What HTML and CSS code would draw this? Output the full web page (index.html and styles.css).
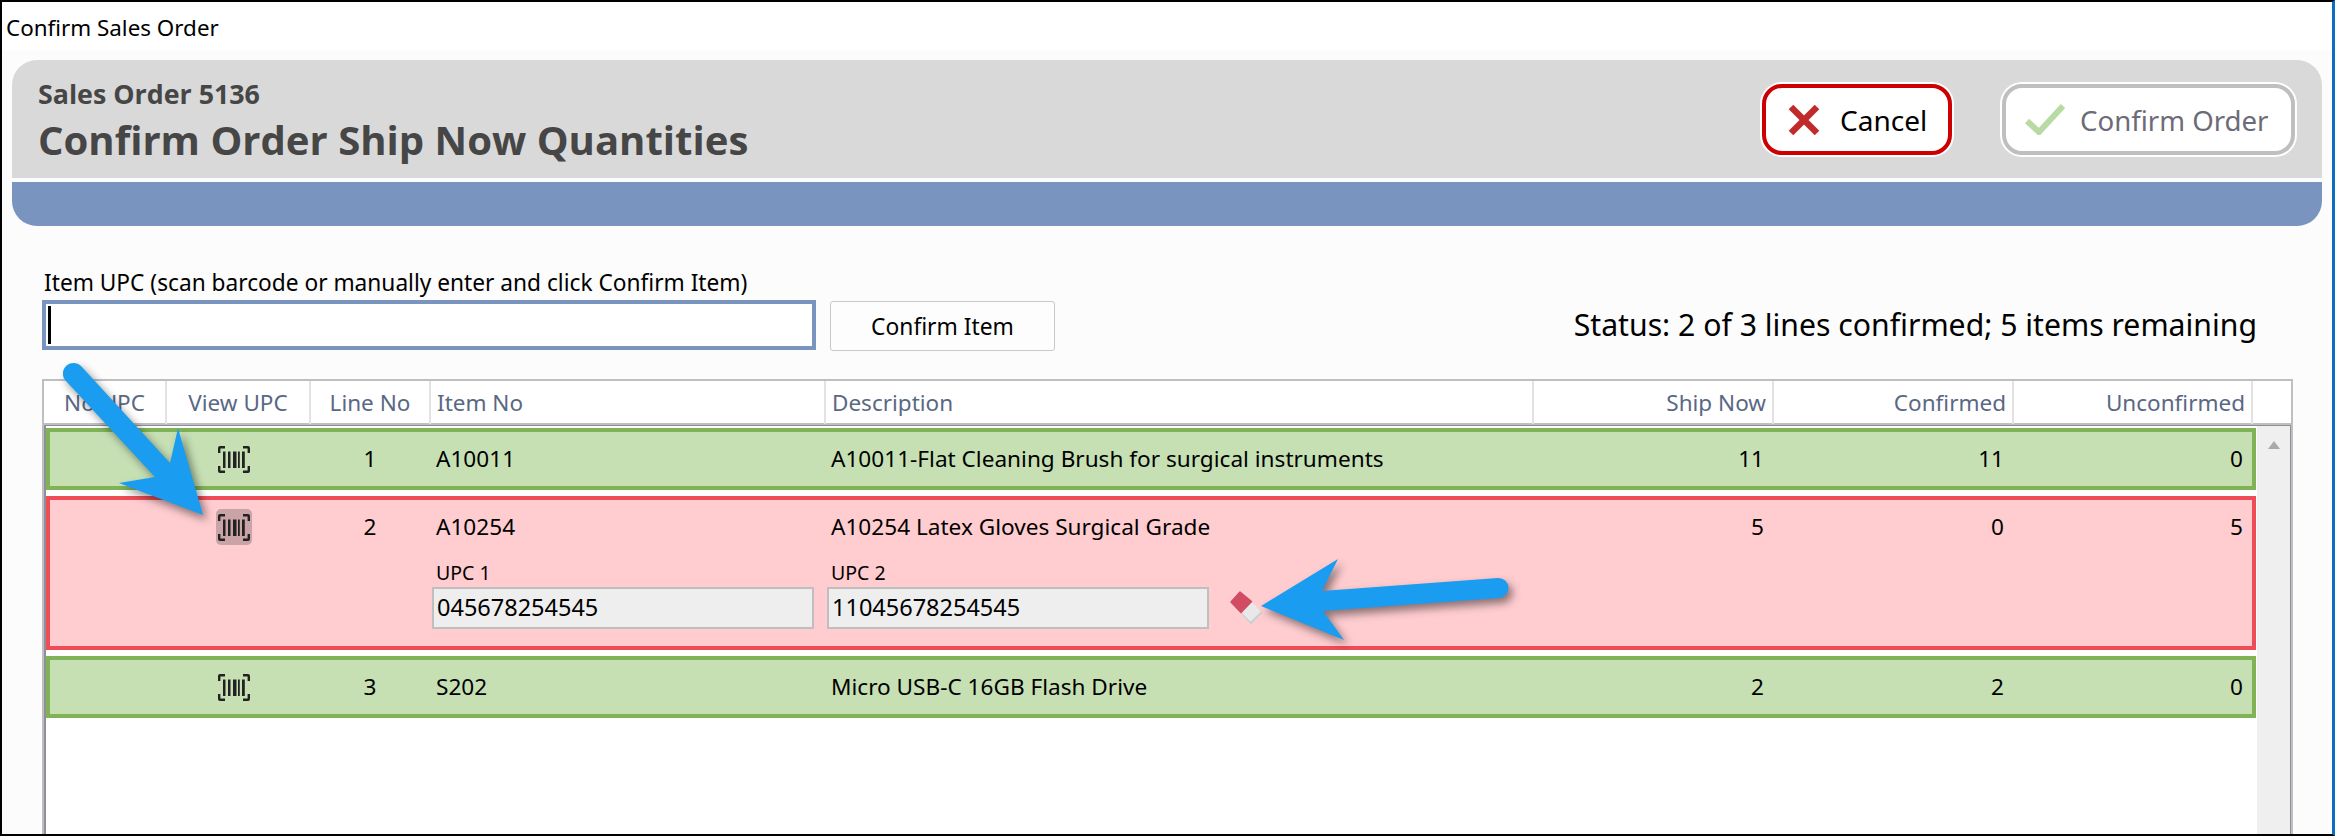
FILE: index.html
```html
<!DOCTYPE html>
<html lang="en">
<head>
<meta charset="utf-8">
<title>Confirm Sales Order</title>
<link rel="stylesheet" href="styles.css">
</head>
<body>
<div class="window">
  <div class="titlebar">Confirm Sales Order</div>
  <div class="content">
    <header class="banner">
      <div class="banner-text">
        <div class="order-no">Sales Order 5136</div>
        <h1 class="page-title">Confirm Order Ship Now Quantities</h1>
      </div>
      <div class="banner-actions">
        <button class="action cancel">
          <svg class="icon-x" viewBox="0 0 32 32" width="32" height="32"><path d="M3 3 L29 29 M29 3 L3 29" stroke="#c12b2b" stroke-width="6.5" fill="none"/></svg>
          <span>Cancel</span>
        </button>
        <button class="action confirm">
          <svg class="icon-check" viewBox="0 0 41 31" width="41" height="31"><path d="M2 17 L14 28 L38 2" stroke="#b9dba3" stroke-width="6" fill="none"/></svg>
          <span>Confirm Order</span>
        </button>
      </div>
    </header>
    <div class="bluebar"></div>

    <section class="scan">
      <div class="scan-left">
        <label class="scan-label">Item UPC (scan barcode or manually enter and click Confirm Item)</label>
        <div class="scan-controls">
          <div class="scan-input"><span class="caret"></span></div>
          <button class="scan-btn">Confirm Item</button>
        </div>
      </div>
      <div class="status">Status: 2 of 3 lines confirmed; 5 items remaining</div>
    </section>

    <section class="table">
      <div class="thead">
        <div class="th center">No UPC</div>
        <div class="th center">View UPC</div>
        <div class="th center">Line No</div>
        <div class="th">Item No</div>
        <div class="th">Description</div>
        <div class="th right">Ship Now</div>
        <div class="th right">Confirmed</div>
        <div class="th right">Unconfirmed</div>
        <div class="th last"></div>
      </div>
      <div class="tbody">
        <div class="rows">
          <div class="row ok">
            <div class="td"></div>
            <div class="td center"><span class="scan-icon"><svg viewBox="0 0 32 27" width="32" height="27"><use href="#barcode"/></svg></span></div>
            <div class="td center">1</div>
            <div class="td">A10011</div>
            <div class="td">A10011-Flat Cleaning Brush for surgical instruments</div>
            <div class="td right">11</div>
            <div class="td right">11</div>
            <div class="td right">0</div>
          </div>
          <div class="row bad">
            <div class="td"></div>
            <div class="td center"><span class="scan-icon active"><svg viewBox="0 0 32 27" width="32" height="27"><use href="#barcode"/></svg></span></div>
            <div class="td center">2</div>
            <div class="td">A10254</div>
            <div class="td">A10254 Latex Gloves Surgical Grade</div>
            <div class="td right">5</div>
            <div class="td right">0</div>
            <div class="td right">5</div>
            <div class="upc upc-one">
              <div class="upc-label">UPC 1</div>
              <div class="upc-box">045678254545</div>
            </div>
            <div class="upc upc-two">
              <div class="upc-label">UPC 2</div>
              <div class="upc-line">
                <div class="upc-box">11045678254545</div>
                <svg class="eraser" viewBox="0 0 33 34" width="33" height="34">
                  <path d="M11 22 L22 12 L32 22 L21 33 Z" fill="#cfcfcf" stroke="#cfcfcf" stroke-linejoin="round"/>
                  <path d="M11 21 L22 11 L31 20.500 L20.500 30.500 Z" fill="#e8e8e8"/>
                  <path d="M1 11 L10 1 L21.500 10.500 L11 21.500 Z" fill="#d14b63" stroke="#d14b63" stroke-width="1.500" stroke-linejoin="round"/>
                </svg>
              </div>
            </div>
          </div>
          <div class="row ok">
            <div class="td"></div>
            <div class="td center"><span class="scan-icon"><svg viewBox="0 0 32 27" width="32" height="27"><use href="#barcode"/></svg></span></div>
            <div class="td center">3</div>
            <div class="td">S202</div>
            <div class="td">Micro USB-C 16GB Flash Drive</div>
            <div class="td right">2</div>
            <div class="td right">2</div>
            <div class="td right">0</div>
          </div>
        </div>
        <div class="scrollbar"><span class="scroll-up"></span></div>
      </div>
    </section>
  </div>

  <svg class="defs" width="0" height="0">
    <symbol id="barcode" viewBox="0 0 32 27">
      <path d="M7 1.200 H2 Q1.200 1.200 1.200 2 V7 M25 1.200 H30 Q30.800 1.200 30.800 2 V7 M7 25.800 H2 Q1.200 25.800 1.200 25 V20 M25 25.800 H30 Q30.800 25.800 30.800 25 V20" fill="none" stroke="#222" stroke-width="2.400"/>
      <path d="M5 5.500 H7.500 V22 H5 Z M10 5.500 H12.500 V22 H10 Z M15 5.500 H18.500 V22 H15 Z M20 5.500 H21.800 V22 H20 Z M24 5.500 H26.800 V22 H24 Z" fill="#222"/>
    </symbol>
  </svg>

  <svg class="arrows" viewBox="0 0 2336 836" width="2336" height="836">
    <path class="arrow" d="M66 381 A10.500 10.500 0 0 1 81 366 L170 463 L178 428 L203 515 L119 483 L155 477 Z"/>
    <path class="arrow" d="M1498 578 A10 10 0 0 1 1499 598 L1323 611 L1344 640 L1261 606 L1338 559 L1322 591 Z"/>
  </svg>
</div>
</body>
</html>
```

FILE: styles.css
```css
* { box-sizing: border-box; }

html, body {
  margin: 0;
  padding: 0;
  background: #fff;
}

.window {
  position: relative;
  width: 2335px;
  height: 836px;
  overflow: hidden;
  display: flex;
  flex-direction: column;
  border: 2px solid #000;
  border-right: 3px solid #0a6fc2;
  border-bottom-color: #000;
  font-family: "Noto Sans", "Open Sans", sans-serif;
  color: #000;
  background: #fcfcfc;
}

.titlebar {
  height: 48px;
  flex: none;
  padding: 9px 0 0 4px;
  background: #fff;
  font-size: 22.400px;
  line-height: 34px;
}

.content {
  flex: 1;
  min-height: 0;
  display: flex;
  flex-direction: column;
  padding: 10px 10px 0;
  background: #fcfcfc;
}

.banner {
  height: 118px;
  flex: none;
  display: flex;
  justify-content: space-between;
  align-items: center;
  padding: 0 27px 0 26px;
  background: #d9d9d9;
  border-radius: 25px 25px 0 0;
  color: #464646;
}

.banner-text { padding-top: 5px; }

.order-no {
  font-family: "Open Sans", sans-serif;
  font-weight: 700;
  font-size: 26.800px;
  line-height: 36px;
}

.page-title {
  margin: 0;
  font-family: "Open Sans", sans-serif;
  font-weight: 700;
  font-size: 40.100px;
  line-height: 56px;
}

.banner-actions {
  display: flex;
  gap: 50px;
  align-items: center;
  margin-top: 1px;
}

.action {
  height: 71px;
  display: flex;
  align-items: center;
  background: #fff;
  border-radius: 20px;
  font-family: "Noto Sans", sans-serif;
  font-size: 28px;
  padding: 0;
  box-shadow: 0 0 0 2px #fff;
}

.cancel {
  width: 190px;
  border: 4px solid #cc0000;
  color: #000;
  padding-left: 22px;
  gap: 20px;
}

.confirm {
  width: 293px;
  border: 4px solid #bfbfbf;
  color: #6c6c78;
  padding-left: 19px;
  gap: 14px;
  font-size: 27.600px;
}

.bluebar {
  height: 44px;
  flex: none;
  margin-top: 4px;
  background: #7a94c0;
  border-radius: 0 0 25px 25px;
}

.scan {
  flex: none;
  display: flex;
  justify-content: space-between;
  align-items: flex-end;
  padding: 42px 65px 0 30px;
}

.scan-label {
  display: block;
  height: 32px;
  padding-left: 2px;
  font-size: 22.700px;
  line-height: 30px;
}

.scan-controls {
  display: flex;
  gap: 14px;
  align-items: flex-start;
}

.scan-input {
  width: 774px;
  height: 50px;
  display: flex;
  align-items: center;
  padding-left: 2px;
  background: #fff;
  border: 4px solid #7a94c0;
}

.caret {
  width: 3px;
  height: 38px;
  background: #000;
}

.scan-btn {
  width: 225px;
  height: 50px;
  margin-top: 1px;
  padding: 0;
  background: #fdfdfd;
  border: 1px solid #c8c8c8;
  border-radius: 3px;
  font-family: "Noto Sans", sans-serif;
  font-size: 22.800px;
  color: #000;
}

.status {
  font-size: 30.200px;
  line-height: 44px;
  margin-bottom: 4px;
}

.table {
  flex: 1;
  min-height: 0;
  display: flex;
  flex-direction: column;
  margin: 28px 29px 0 30px;
  border: solid #bfbfbf;
  border-width: 2px 2px 0;
  background: #fff;
}

.thead {
  height: 44px;
  flex: none;
  display: grid;
  grid-template-columns: 123px 144px 120px 395px 708px 240px 240px 239px 1fr;
  border-bottom: 2px solid #bfbfbf;
  background: #fff;
}

.th {
  padding: 0 6px;
  border-right: 2px solid #e2e2e2;
  font-size: 22.500px;
  line-height: 43px;
  color: #5a6884;
  white-space: nowrap;
}

.th.last { border-right: 0; }

.center { text-align: center; }

.right { text-align: right; }

.tbody {
  flex: 1;
  min-height: 0;
  display: flex;
  border: solid #8f8f9c;
  border-width: 1px 2px 0;
}

.rows {
  width: 2210px;
  flex: none;
  display: flex;
  flex-direction: column;
  gap: 6px;
  padding-top: 2px;
}

.row {
  display: grid;
  grid-template-columns: 116px 144px 120px 395px 708px 240px 240px 239px;
  align-content: start;
  height: 62px;
  border: 4px solid;
  font-size: 22.600px;
  white-space: nowrap;
}

.row.ok {
  background: #c6e0b4;
  border-color: #7fb356;
}

.row.bad {
  height: 154px;
  background: #ffcdd0;
  border-color: #ee4d55;
}

.td {
  height: 54px;
  padding: 0 6px;
  line-height: 53px;
}

.td.right { padding-right: 9px; }

.scan-icon {
  display: inline-flex;
  align-items: center;
  justify-content: center;
  width: 36px;
  height: 36px;
  margin: 9px 0 0 -8px;
  border-radius: 5px;
  vertical-align: top;
}

.scan-icon.active { background: #c9a3a5; }

.upc {
  margin-top: -1px;
  padding-left: 2px;
}

.upc-one { grid-column: 4; }

.upc-two { grid-column: 5 / span 2; }

.upc-label {
  height: 34px;
  padding-left: 4px;
  font-size: 19.500px;
  line-height: 40px;
}

.upc-line {
  display: flex;
  align-items: flex-start;
  gap: 21px;
}

.upc-box {
  width: 382px;
  height: 42px;
  padding-left: 3px;
  background: #eee;
  border: 2px solid #bfbfbf;
  font-size: 23.500px;
  line-height: 37px;
}

.eraser { margin-top: 4px; }

.scrollbar {
  width: 33px;
  flex: none;
  margin-left: 1px;
  display: flex;
  justify-content: center;
  background: #efefef;
  padding-top: 15px;
}

.scroll-up {
  width: 0;
  height: 0;
  border: 6px solid transparent;
  border-top: 0;
  border-bottom: 8px solid #a9a9a9;
}

.defs { position: absolute; }

.arrows {
  position: absolute;
  left: -2px;
  top: -2px;
  pointer-events: none;
}

.arrow {
  fill: #1a9cf0;
  filter: drop-shadow(4px 5px 4px rgba(0, 0, 0, 0.45));
}
```
